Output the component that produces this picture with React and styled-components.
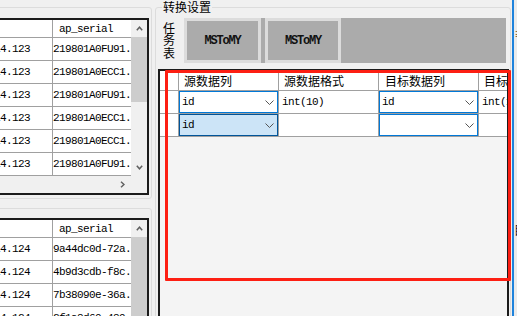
import React from 'react';
import styled, { createGlobalStyle } from 'styled-components';

const Global = createGlobalStyle`
  html, body { margin: 0; padding: 0; background: #f0f0f0; }
  body { font-family: "Noto Sans CJK SC", "Noto Sans", sans-serif; }
  * { box-sizing: border-box; }
`;

const Page = styled.div`
  width: 517px;
  height: 316px;
  overflow: hidden;
  display: flex;
  background: #f0f0f0;
`;

/* ---------- left side ---------- */
const LeftPane = styled.div`
  width: 192px;
  margin-left: -40px;
  flex-shrink: 0;
  display: flex;
  flex-direction: column;
`;

const GroupBox = styled.div`
  flex-shrink: 0;
  border: 1px solid #dcdcdc;
  border-radius: 3px;
  margin-top: ${(p) => p.$mt}px;
  padding: ${(p) => p.$pt}px 2px 3px 0;
`;

const Table = styled.div`
  border: 2px solid #1b1b1b;
  background: #fff;
  display: flex;
  flex-direction: column;
  font-family: "Liberation Mono", monospace;
  font-size: 11px;
  letter-spacing: -0.6px;
  color: #000;
`;

const TableBody = styled.div`
  display: flex;
`;

const Grid = styled.div`
  flex: 1;
  min-width: 0;
  display: flex;
  flex-direction: column;
`;

const TRow = styled.div`
  display: flex;
  flex-shrink: 0;
  height: ${(p) => p.$h}px;
  border-bottom: 1px solid #a0a0a0;
`;

const TCell = styled.div`
  display: flex;
  align-items: center;
  white-space: nowrap;
  overflow: hidden;
  flex: ${(p) => (p.$w ? `0 0 ${p.$w}px` : '1')};
  border-right: ${(p) => (p.$w ? '1px solid #a0a0a0' : 'none')};
  padding-left: ${(p) => p.$pl || 0}px;
`;

const VScroll = styled.div`
  width: 16px;
  flex-shrink: 0;
  background: #f0f0f0;
  display: flex;
  flex-direction: column;
`;

const ArrowBox = styled.div`
  flex: 0 0 17px;
  display: flex;
  align-items: center;
  justify-content: center;
  width: ${(p) => (p.$w ? `${p.$w}px` : 'auto')};
`;

const Thumb = styled.div`
  background: #cdcdcd;
  flex: ${(p) => (p.$fill ? '1' : `0 0 ${p.$h}px`)};
`;

const Spacer = styled.div`
  flex: 1;
`;

const HScroll = styled.div`
  height: 17px;
  display: flex;
  background: #f0f0f0;
`;

const HTrack = styled.div`
  flex: 1;
  display: flex;
  justify-content: flex-end;
`;

const Corner = styled.div`
  width: 16px;
`;

const Chevron = ({ dir }) => {
  const pts = {
    up: '0.8,4.2 3.5,1.2 6.2,4.2',
    down: '0.8,0.8 3.5,3.8 6.2,0.8',
    right: '1,0.8 4,3.5 1,6.2',
  }[dir];
  const w = dir === 'right' ? 5 : 7;
  const h = dir === 'right' ? 7 : 5;
  return (
    <svg width={w} height={h} viewBox={`0 0 ${w} ${h}`}>
      <polyline points={pts} fill="none" stroke="#606060" strokeWidth="1.5" />
    </svg>
  );
};

const DataTable = ({ rows, fillThumb, hscroll }) => (
  <Table>
    <TableBody>
      <Grid>
        <TRow $h={18}>
          <TCell $w={90} />
          <TCell $pl={6}>ap_serial</TCell>
        </TRow>
        {rows.map(([a, b], i) => (
          <TRow key={i} $h={23}>
            <TCell $w={90} $pl={1}>{a}</TCell>
            <TCell>{b}</TCell>
          </TRow>
        ))}
      </Grid>
      <VScroll>
        <ArrowBox>
          <Chevron dir="up" />
        </ArrowBox>
        {fillThumb ? (
          <Thumb $fill />
        ) : (
          <>
            <Thumb $h={65} />
            <Spacer />
            <ArrowBox>
              <Chevron dir="down" />
            </ArrowBox>
          </>
        )}
      </VScroll>
    </TableBody>
    {hscroll && (
      <HScroll>
        <HTrack>
          <ArrowBox $w={17}>
            <Chevron dir="right" />
          </ArrowBox>
        </HTrack>
        <Corner />
      </HScroll>
    )}
  </Table>
);

const rows1 = [
  ['10.0.14.123', '219801A0FU91.'],
  ['10.0.14.123', '219801A0ECC1.'],
  ['10.0.14.123', '219801A0FU91.'],
  ['10.0.14.123', '219801A0ECC1.'],
  ['10.0.14.123', '219801A0ECC1.'],
  ['10.0.14.123', '219801A0FU91.'],
];

const rows2 = [
  ['10.0.14.124', '9a44dc0d-72a.'],
  ['10.0.14.124', '4b9d3cdb-f8c.'],
  ['10.0.14.124', '7b38090e-36a.'],
  ['10.0.14.124', '2f1a8d60-489.'],
];

/* ---------- right side ---------- */
const RightGroup = styled.div`
  position: relative;
  width: 356px;
  height: 330px;
  flex-shrink: 0;
  margin-left: 3px;
  margin-top: 7px;
  border: 1px solid #dcdcdc;
  border-radius: 3px;
  padding: 10px 1px 0 2px;
  display: flex;
  flex-direction: column;
`;

const Legend = styled.span`
  position: absolute;
  top: -9px;
  left: 6px;
  padding: 0 1px;
  background: #f0f0f0;
  font-size: 12px;
  line-height: 15px;
  color: #000;
`;

const TaskRow = styled.div`
  display: flex;
  height: 45px;
  flex-shrink: 0;
`;

const TaskLabel = styled.div`
  width: 13px;
  margin-left: 5px;
  margin-right: 8px;
  align-self: center;
  font-size: 12px;
  line-height: 12.5px;
  color: #000;
  word-break: break-all;
`;

const TaskArea = styled.div`
  flex: 1;
  margin-right: 3px;
  background: #ababab;
  display: flex;
  gap: 4px;
`;

const TaskButton = styled.div`
  width: ${(p) => p.$w}px;
  border: 3px solid #dcdcdc;
  background: #ababab;
  display: flex;
  align-items: center;
  justify-content: center;
  font-family: "Liberation Mono", monospace;
  font-weight: bold;
  font-size: 12px;
  letter-spacing: -1.2px;
  color: #111;
`;

const MapGrid = styled.div`
  margin-top: 6px;
  flex: 1;
  border: 2px solid #1b1b1b;
  background: #f4f4f4;
  overflow: hidden;
  display: flex;
  flex-direction: column;
`;

const MRow = styled.div`
  display: flex;
  flex-shrink: 0;
  height: ${(p) => p.$h}px;
`;

const MCell = styled.div`
  flex: 0 0 ${(p) => p.$w}px;
  background: #fff;
  border-right: 1px solid #a0a0a0;
  border-bottom: 1px solid #a0a0a0;
  display: flex;
  align-items: center;
  white-space: nowrap;
  overflow: hidden;
  padding-left: ${(p) => p.$pl || 0}px;
  font-family: ${(p) =>
    p.$head ? '"Noto Sans CJK SC", sans-serif' : '"Liberation Mono", monospace'};
  font-size: ${(p) => (p.$head ? 12 : 11)}px;
  letter-spacing: ${(p) => (p.$head ? 0 : -0.6)}px;
  color: #000;
`;

const Combo = styled.div`
  flex: 1;
  align-self: stretch;
  display: flex;
  align-items: center;
  justify-content: space-between;
  padding: 0 3px 0 2px;
  border: 1px solid ${(p) => (p.$sel ? '#005499' : '#0078d7')};
  background: ${(p) => (p.$sel ? '#cce4f7' : '#fff')};
`;

const ComboArrow = () => (
  <svg width="9" height="5" viewBox="0 0 9 5">
    <polyline points="0.5,0.5 4.5,4.5 8.5,0.5" fill="none" stroke="#555" strokeWidth="1" />
  </svg>
);

const ComboBox = ({ value, sel }) => (
  <Combo $sel={sel}>
    <span>{value}</span>
    <ComboArrow />
  </Combo>
);

const RedMark = styled.div`
  position: absolute;
  left: 9px;
  top: 62px;
  width: 346px;
  height: 211px;
  border: 3px solid #fd1f13;
  border-radius: 1px;
  pointer-events: none;
`;

const Gap = styled.div`
  width: 1px;
  flex-shrink: 0;
`;

const BlueEdge = styled.div`
  width: 2px;
  flex-shrink: 0;
  background: #1f83dc;
`;

const OtherWin = styled.div`
  flex: 1;
  background: #ebebeb;
  overflow: hidden;
  display: flex;
  flex-direction: column;
  font-size: 12px;
  line-height: 12px;
  white-space: nowrap;
`;

const OtherText = styled.div`
  margin-top: ${(p) => p.$mt}px;
  color: ${(p) => p.$c};
`;

export default function App() {
  return (
    <Page>
      <Global />
      <LeftPane>
        <GroupBox $mt={7} $pt={10}>
          <DataTable rows={rows1} hscroll />
        </GroupBox>
        <GroupBox $mt={9} $pt={9}>
          <DataTable rows={rows2} fillThumb />
        </GroupBox>
      </LeftPane>

      <RightGroup>
        <Legend>转换设置</Legend>
        <TaskRow>
          <TaskLabel>任务表</TaskLabel>
          <TaskArea>
            <TaskButton $w={77}>MSToMY</TaskButton>
            <TaskButton $w={76}>MSToMY</TaskButton>
          </TaskArea>
        </TaskRow>
        <MapGrid>
          <MRow $h={20}>
            <MCell $w={19} />
            <MCell $w={100} $pl={5} $head>源数据列</MCell>
            <MCell $w={100} $pl={5} $head>源数据格式</MCell>
            <MCell $w={100} $pl={6} $head>目标数据列</MCell>
            <MCell $w={100} $pl={5} $head>目标数据格式</MCell>
          </MRow>
          <MRow $h={23}>
            <MCell $w={19} />
            <MCell $w={100}><ComboBox value="id" /></MCell>
            <MCell $w={100} $pl={3}>int(10)</MCell>
            <MCell $w={100}><ComboBox value="id" /></MCell>
            <MCell $w={100} $pl={3}>int(10)</MCell>
          </MRow>
          <MRow $h={23}>
            <MCell $w={19} />
            <MCell $w={100}><ComboBox value="id" sel /></MCell>
            <MCell $w={100} />
            <MCell $w={100}><ComboBox value="" /></MCell>
            <MCell $w={100} />
          </MRow>
        </MapGrid>
        <RedMark />
      </RightGroup>

      <Gap />
      <BlueEdge />
      <OtherWin>
        <OtherText $mt={28} $c="#6b4e22">≡</OtherText>
        <OtherText $mt={184} $c="#222">目</OtherText>
      </OtherWin>
    </Page>
  );
}
